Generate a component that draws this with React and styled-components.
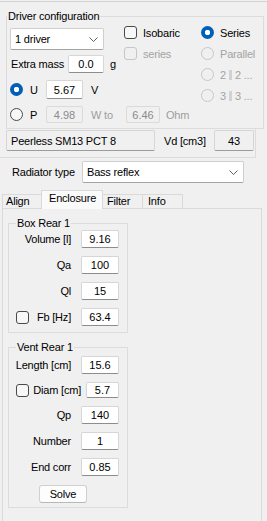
import React from 'react';
import styled, { createGlobalStyle } from 'styled-components';

const GlobalStyle = createGlobalStyle`
  html, body { margin: 0; padding: 0; background: #f0f0f0; }
  body {
    font-family: "Liberation Sans", Arial, sans-serif;
    font-size: 11px;
    letter-spacing: -0.2px;
    color: #000;
  }
  * { box-sizing: border-box; }
`;

const Window = styled.div`
  width: 267px;
  height: 521px;
  overflow: hidden;
  padding-top: 1px;
`;

const Top = styled.div`
  border-top: 1px solid #d2d2d2;
`;

const Group = styled.fieldset`
  margin: ${(p) => p.$margin};
  padding: 0;
  width: ${(p) => p.$width}px;
  min-width: 0;
  border: 1px solid #dcdcdc;
`;

const Legend = styled.legend`
  margin-left: ${(p) => p.$offset}px;
  padding: 0 1px;
  height: 14px;
  line-height: 14px;
`;

const DriverBody = styled.div`
  display: flex;
  padding: 0 0 5px 3px;
`;

const MainCol = styled.div`
  width: 191px;
  display: flex;
  flex-direction: column;
`;

const Upper = styled.div`
  display: flex;
`;

const LeftStack = styled.div`
  width: 114px;
  display: flex;
  flex-direction: column;
`;

const OptionStack = styled.div`
  display: flex;
  flex-direction: column;
  gap: 8px;
  padding-top: 3px;
`;

const Combo = styled.div`
  width: ${(p) => p.$width}px;
  height: 22px;
  margin-top: ${(p) => p.$top || 0}px;
  display: flex;
  align-items: center;
  justify-content: space-between;
  padding: 0 5px 0 4px;
  background: #fff;
  border: 1px solid #cfcfcf;
  border-bottom-color: #a3a3a3;
  border-radius: 2px;
`;

const Chevron = () => (
  <svg width="9" height="5" viewBox="0 0 9 5">
    <polyline points="0.5,0.5 4.5,4.5 8.5,0.5" fill="none" stroke="#606060" strokeWidth="1" />
  </svg>
);

const Row = styled.div`
  display: flex;
  align-items: center;
  height: ${(p) => p.$h}px;
  margin-top: ${(p) => p.$top || 0}px;
`;

const Text = styled.span`
  width: ${(p) => (p.$w ? `${p.$w}px` : 'auto')};
  margin-left: ${(p) => p.$ml || 0}px;
  color: ${(p) => (p.$dim ? '#9d9d9d' : '#000')};
  white-space: nowrap;
  flex: none;
`;

const Field = styled.input`
  width: ${(p) => p.$w}px;
  height: ${(p) => p.$h || 18}px;
  padding: 0;
  margin: 0;
  font: inherit;
  text-align: center;
  color: ${(p) => (p.disabled ? '#8a8a8a' : '#000')};
  background: ${(p) => (p.disabled ? '#f0f0f0' : '#fff')};
  border: 1px solid ${(p) => (p.disabled ? '#dadada' : '#d6d6d6')};
  border-bottom-color: ${(p) => (p.disabled ? '#dadada' : '#8d8d8d')};
  border-radius: 2px;
  outline: none;
  flex: none;
`;

const Check = styled.span`
  width: 13px;
  height: 13px;
  flex: none;
  border: 1px solid ${(p) => (p.$off ? '#c6c6c6' : '#4a4a4a')};
  border-radius: 3px;
  background: ${(p) => (p.$off ? '#f0f0f0' : '#f7f7f7')};
  margin-left: ${(p) => p.$ml || 0}px;
`;

const Radio = styled.span`
  width: 13px;
  height: 13px;
  flex: none;
  border-radius: 50%;
  border: ${(p) => (p.$on ? 'none' : `1px solid ${p.$off ? '#c6c6c6' : '#4a4a4a'}`)};
  background: ${(p) =>
    p.$on ? 'radial-gradient(circle, #fff 0 2.4px, #005fb8 3px)' : p.$off ? '#f0f0f0' : '#f7f7f7'};
`;

const Option = styled.div`
  display: flex;
  align-items: center;
  height: 13px;
  gap: 6px;
  color: ${(p) => (p.$off ? '#a3a3a3' : '#000')};
  white-space: nowrap;
`;

const Bar = styled.span`
  display: inline-block;
  width: 3px;
  height: 10px;
  margin: 0 3px -1px 3px;
  background: #d2d2d2;
`;

const Panel = styled.div`
  width: 256px;
  display: flex;
  align-items: center;
  padding: 1px 0 6px 6px;
  border-right: 1px solid #dcdcdc;
  border-bottom: 1px solid #dcdcdc;
`;

const ReadBox = styled.div`
  width: ${(p) => p.$w}px;
  height: 21px;
  flex: none;
  display: flex;
  align-items: center;
  justify-content: ${(p) => (p.$center ? 'center' : 'flex-start')};
  padding-left: ${(p) => (p.$center ? 0 : 4)}px;
  background: #f0f0f0;
  border: 1px solid #d6d6d6;
  border-bottom-color: #9c9c9c;
  border-radius: 2px;
`;

const TypeRow = styled.div`
  display: flex;
  align-items: center;
  margin-top: 3px;
  padding-left: 12px;
`;

const TabStrip = styled.div`
  display: flex;
  align-items: flex-end;
  height: 18px;
  margin-top: 7px;
  padding-left: 2px;
`;

const Tab = styled.div`
  position: relative;
  width: ${(p) => p.$w}px;
  height: ${(p) => (p.$active ? 19 : 14)}px;
  margin-left: ${(p) => (p.$first ? 0 : -1)}px;
  margin-bottom: ${(p) => (p.$active ? -1 : 0)}px;
  padding: ${(p) => (p.$active ? 1 : 0)}px 0 0 ${(p) => p.$pl}px;
  line-height: 13px;
  background: ${(p) => (p.$active ? '#fafafa' : '#f0f0f0')};
  border: 1px solid #d9d9d9;
  border-bottom: none;
  z-index: ${(p) => (p.$active ? 1 : 0)};
`;

const Page = styled.div`
  margin-left: 2px;
  width: 260px;
  height: 320px;
  border: 1px solid #d9d9d9;
  border-bottom: none;
  padding-top: 7px;
`;

const GroupBody = styled.div`
  display: flex;
  flex-direction: column;
  gap: 8px;
  padding: ${(p) => p.$pad};
`;

const FieldRow = styled.div`
  display: flex;
  align-items: center;
  height: ${(p) => p.$h || 18}px;
`;

const FieldLabel = styled.span`
  flex: 1;
  text-align: right;
  margin-right: ${(p) => p.$gap || 10}px;
  white-space: nowrap;
`;

const Button = styled.div`
  width: 48px;
  height: 18px;
  margin: 1px 0 0 30px;
  display: flex;
  align-items: center;
  justify-content: center;
  background: #fdfdfd;
  border: 1px solid #d0d0d0;
  border-bottom-color: #b8b8b8;
  border-radius: 3px;
`;

const Param = ({ label, value, check, gap, w = 38, h = 18 }) => (
  <FieldRow $h={h}>
    {check && <Check $ml={7} />}
    <FieldLabel $gap={gap}>{label}</FieldLabel>
    <Field readOnly defaultValue={value} $w={w} $h={h} />
  </FieldRow>
);

export default function App() {
  return (
    <Window>
      <GlobalStyle />
      <Top>
        <Group $margin="7px 0 0 6px" $width={258}>
          <Legend $offset={0}>Driver configuration</Legend>
          <DriverBody>
            <MainCol>
              <Upper>
                <LeftStack>
                  <Combo $width={94} $top={5}>
                    <span>1 driver</span>
                    <Chevron />
                  </Combo>
                  <Row $h={18} $top={5}>
                    <Text $w={57} $ml={1}>Extra mass</Text>
                    <Field readOnly defaultValue="0.0" $w={36} />
                    <Text $ml={6}>g</Text>
                  </Row>
                  <Row $h={19} $top={7}>
                    <Radio $on />
                    <Text $w={16} $ml={7}>U</Text>
                    <Field readOnly defaultValue="5.67" $w={37} $h={19} />
                    <Text $ml={8}>V</Text>
                  </Row>
                </LeftStack>
                <OptionStack>
                  <Option>
                    <Check />
                    Isobaric
                  </Option>
                  <Option $off>
                    <Check $off />
                    series
                  </Option>
                </OptionStack>
              </Upper>
              <Row $h={17} $top={7}>
                <Radio />
                <Text $w={16} $ml={7}>P</Text>
                <Field disabled defaultValue="4.98" $w={37} $h={17} />
                <Text $w={35} $ml={8} $dim>W to</Text>
                <Field disabled defaultValue="6.46" $w={34} $h={17} />
                <Text $ml={6} $dim>Ohm</Text>
              </Row>
            </MainCol>
            <OptionStack>
              <Option>
                <Radio $on />
                Series
              </Option>
              <Option $off>
                <Radio $off />
                Parallel
              </Option>
              <Option $off>
                <Radio $off />
                <span>
                  2<Bar />2 ...
                </span>
              </Option>
              <Option $off>
                <Radio $off />
                <span>
                  3<Bar />3 ...
                </span>
              </Option>
            </OptionStack>
          </DriverBody>
        </Group>
        <Panel>
          <ReadBox $w={149}>Peerless SM13 PCT 8</ReadBox>
          <Text $w={50} $ml={9}>Vd [cm3]</Text>
          <ReadBox $w={40} $center>43</ReadBox>
        </Panel>
      </Top>
      <TypeRow>
        <Text $w={70}>Radiator type</Text>
        <Combo $width={162}>
          <span>Bass reflex</span>
          <Chevron />
        </Combo>
      </TypeRow>
      <TabStrip>
        <Tab $first $w={40} $pl={3}>Align</Tab>
        <Tab $active $w={62} $pl={7}>Enclosure</Tab>
        <Tab $w={41} $pl={4}>Filter</Tab>
        <Tab $w={41} $pl={5}>Info</Tab>
      </TabStrip>
      <Page>
        <Group $margin="0 0 0 5px" $width={120}>
          <Legend $offset={7}>Box Rear 1</Legend>
          <GroupBody $pad="0 8px 6px 0">
            <Param label="Volume [l]" value="9.16" />
            <Param label="Qa" value="100" />
            <Param label="Ql" value="15" />
            <Param label="Fb [Hz]" value="63.4" check />
          </GroupBody>
        </Group>
        <Group $margin="7px 0 0 5px" $width={120}>
          <Legend $offset={7}>Vent Rear 1</Legend>
          <GroupBody $pad="2px 8px 4px 0">
            <Param label="Length [cm]" value="15.6" />
            <Param label="Diam [cm]" value="5.7" check gap={5} w={33} h={16} />
            <Param label="Qp" value="140" />
            <Param label="Number" value="1" />
            <Param label="End corr" value="0.85" />
            <Button>Solve</Button>
          </GroupBody>
        </Group>
      </Page>
    </Window>
  );
}
